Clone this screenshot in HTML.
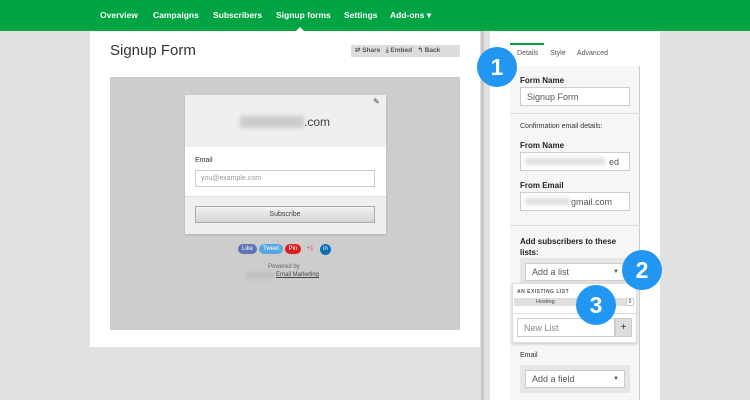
<!DOCTYPE html>
<html><head><style>
*{box-sizing:border-box;margin:0;padding:0}
body{width:750px;height:400px;overflow:hidden;background:#e1e1e1;font-family:"Liberation Sans",Arial,sans-serif;position:relative;color:#333}
.abs{position:absolute}
.nav{left:0;top:0;width:750px;height:31px;background:#00a443}
.nav span{position:absolute;top:10px;color:#fff;font-size:8.5px;font-weight:bold}
.card{left:90px;top:31px;width:390px;height:316px;background:#fff}
.prev{left:110px;top:77px;width:350px;height:253px;background:#cdcdcd}
.right{left:490px;top:31px;width:170px;height:369px;background:#fff}
.inner{left:510px;top:66px;width:130px;height:334px;background:#f6f6f6;border-right:1px solid #ccc}
.lbl{font-size:8px;font-weight:bold;color:#222}
.inp{background:#fff;border:1px solid #ccc;font-size:9px;color:#555;padding:0 0 0 6px;line-height:18px}
.circ{width:40px;height:40px;border-radius:50%;background:#2196f3;color:#fff;font-weight:bold;font-size:23px;text-align:center;line-height:40px}
.blur{background:#ddd;filter:blur(2px)}
</style></head><body>
<div class="abs nav">
<span style="left:100px">Overview</span><span style="left:153px">Campaigns</span><span style="left:213px">Subscribers</span><span style="left:276px">Signup forms</span><span style="left:344px">Settings</span><span style="left:390px">Add-ons ▾</span>
<div class="abs" style="left:296px;top:27px;width:0;height:0;border:4px solid transparent;border-bottom-color:#fff;border-top:0"></div>
</div>
<div class="abs card"></div>
<div class="abs" style="left:110px;top:42px;font-size:15px;color:#333">Signup Form</div>
<div class="abs" style="left:351px;top:45px;width:109px;height:12px;background:#ddd;font-size:6.5px;font-weight:bold;color:#555;line-height:12px;padding-left:4px;white-space:pre">⇄ Share   ⤓ Embed   ↰ Back</div>
<div class="abs prev"></div>
<div class="abs" style="left:185px;top:95px;width:201px;height:139px;background:#efefef;box-shadow:0 1px 2px rgba(0,0,0,.15)"></div>
<div class="abs" style="left:185px;top:147px;width:201px;height:50px;background:#fff;border-bottom:1px solid #ddd"></div>
<div class="abs" style="left:373px;top:97px;font-size:8px">✎</div>
<div class="abs blur" style="left:240px;top:116px;width:64px;height:12px;background:#ccc"></div>
<div class="abs" style="left:304px;top:115px;font-size:12px;color:#444">.com</div>
<div class="abs" style="left:195px;top:157px;font-size:7px">Email</div>
<div class="abs inp" style="left:195px;top:170px;width:180px;height:17px;font-size:7px;color:#999;line-height:15px;padding-left:5px">you@example.com</div>
<div class="abs" style="left:195px;top:206px;width:180px;height:17px;background:linear-gradient(#f2f2f2,#d4d4d4);border:1px solid #aaa;font-size:7px;text-align:center;line-height:15px;color:#444">Subscribe</div>
<div class="abs" style="left:238px;top:244px;width:19px;height:10px;border-radius:5px;background:#5d73b5;font-size:6px;color:#fff;text-align:center;line-height:10px">Like</div>
<div class="abs" style="left:259px;top:244px;width:24px;height:10px;border-radius:5px;background:#55a8e0;font-size:6px;color:#fff;text-align:center;line-height:10px">Tweet</div>
<div class="abs" style="left:285px;top:244px;width:16px;height:10px;border-radius:5px;background:#d82020;font-size:6px;color:#fff;text-align:center;line-height:10px">Pin</div>
<div class="abs" style="left:303px;top:244px;width:14px;height:10px;font-size:6px;color:#d44;text-align:center;line-height:10px">+1</div>
<div class="abs" style="left:320px;top:244px;width:11px;height:11px;border-radius:50%;background:#0a6fb5;font-size:6px;color:#fff;text-align:center;line-height:11px">in</div>
<div class="abs" style="left:268px;top:264px;font-size:6px;color:#666">Powered by</div>
<div class="abs blur" style="left:246px;top:273px;width:28px;height:5px;background:#bbb"></div>
<div class="abs" style="left:276px;top:272px;font-size:6px;color:#444;text-decoration:underline">Email Marketing</div>

<div class="abs" style="left:481px;top:31px;width:3px;height:369px;background:#c8c8c8"></div>
<div class="abs right"></div>
<div class="abs" style="left:510px;top:43px;width:34px;height:2px;background:#00a443"></div>
<div class="abs" style="left:517px;top:50px;font-size:7px;color:#555;white-space:pre">Details      Style      Advanced</div>
<div class="abs inner"></div>
<div class="abs lbl" style="left:520px;top:76px">Form Name</div>
<div class="abs inp" style="left:520px;top:87px;width:110px;height:19px">Signup Form</div>
<div class="abs" style="left:510px;top:113px;width:130px;height:1px;background:#e0e0e0"></div>
<div class="abs" style="left:520px;top:123px;font-size:7px;color:#333">Confirmation email details:</div>
<div class="abs lbl" style="left:520px;top:141px">From Name</div>
<div class="abs inp" style="left:520px;top:152px;width:110px;height:19px;padding-left:88px">ed</div>
<div class="abs blur" style="left:525px;top:158px;width:80px;height:7px"></div>
<div class="abs lbl" style="left:520px;top:181px">From Email</div>
<div class="abs inp" style="left:520px;top:192px;width:110px;height:19px;padding-left:50px">gmail.com</div>
<div class="abs blur" style="left:525px;top:198px;width:45px;height:7px"></div>
<div class="abs" style="left:510px;top:225px;width:130px;height:1px;background:#e0e0e0"></div>
<div class="abs lbl" style="left:520px;top:236px;line-height:11px;width:110px">Add subscribers to these lists:</div>
<div class="abs" style="left:520px;top:258px;width:110px;height:26px;background:#e6e6e6"></div>
<div class="abs inp" style="left:525px;top:263px;width:100px;height:18px;font-size:9px;line-height:16px">Add a list<span style="position:absolute;right:5px;font-size:6px">▼</span></div>
<div class="abs" style="left:512px;top:283px;width:125px;height:60px;background:#fff;border:1px solid #ddd;box-shadow:0 1px 3px rgba(0,0,0,.2)"></div>
<div class="abs" style="left:517px;top:289px;font-size:5px;font-weight:bold;color:#555;letter-spacing:.5px">AN EXISTING LIST</div>
<div class="abs" style="left:514px;top:298px;width:112px;height:8px;background:#e0e0e0;font-size:5.5px;line-height:8px;padding-left:22px;color:#444">Hosting</div>
<div class="abs" style="left:626px;top:298px;width:8px;height:8px;border:1px solid #ccc;font-size:5px;text-align:center;line-height:6px">0</div>
<div class="abs" style="left:512px;top:313px;width:125px;height:1px;background:#ddd"></div>
<div class="abs inp" style="left:517px;top:318px;width:98px;height:19px;color:#888">New List</div>
<div class="abs" style="left:615px;top:318px;width:17px;height:19px;background:#ddd;border:1px solid #ccc;font-size:10px;text-align:center;line-height:17px">+</div>
<div class="abs" style="left:520px;top:352px;font-size:7px">Email</div>
<div class="abs" style="left:520px;top:365px;width:110px;height:28px;background:#e6e6e6"></div>
<div class="abs inp" style="left:525px;top:370px;width:100px;height:18px;line-height:16px">Add a field<span style="position:absolute;right:5px;font-size:6px">▼</span></div>

<div class="abs circ" style="left:477px;top:47px">1</div>
<div class="abs circ" style="left:622px;top:250px">2</div>
<div class="abs circ" style="left:576px;top:285px">3</div>
</body></html>
